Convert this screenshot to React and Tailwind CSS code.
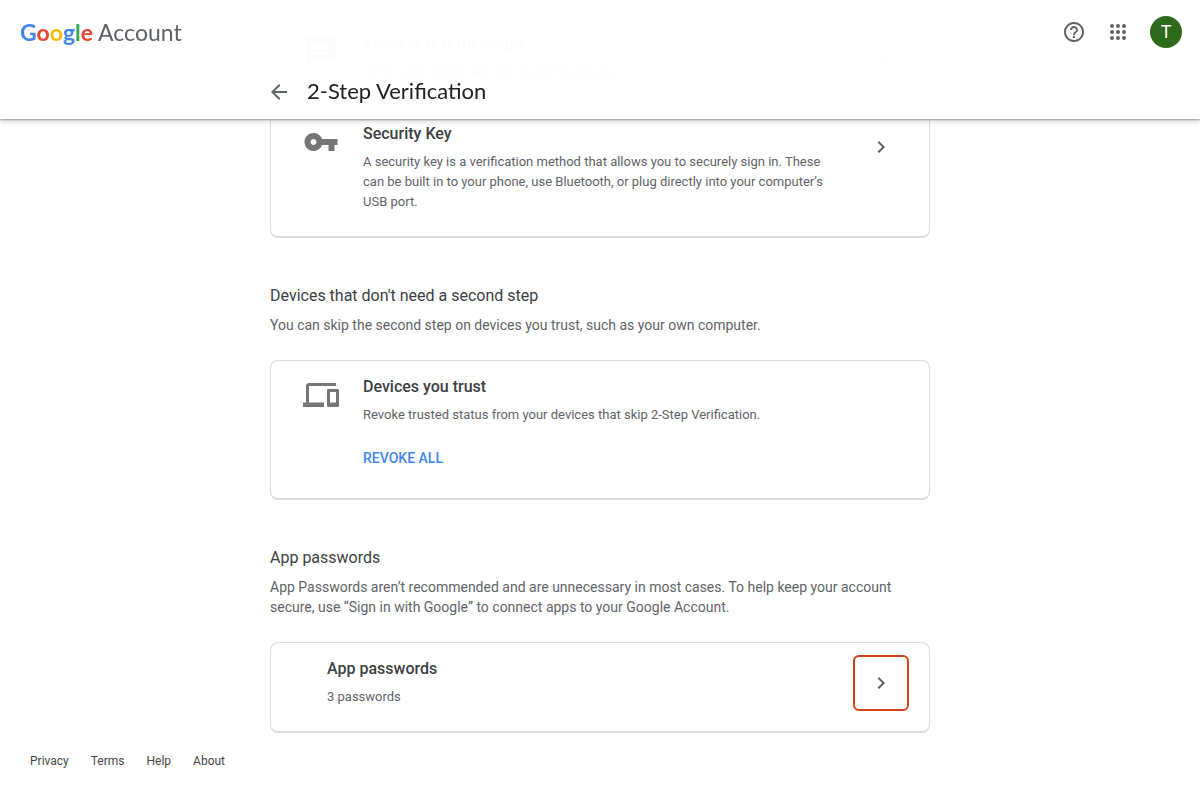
import React from "react";

const ICONS = {
  sms: "M20 2H4a2 2 0 0 0-2 2v18l4-4h14a2 2 0 0 0 2-2V4a2 2 0 0 0-2-2zM6 8h12v2H6V8zm0 4h12v2H6v-2z",
  key: "M12.65 10C11.83 7.67 9.61 6 7 6c-3.31 0-6 2.69-6 6s2.69 6 6 6c2.61 0 4.83-1.67 5.65-4H17v4h4v-4h2v-4H12.65zM7 14c-1.1 0-2-.9-2-2s.9-2 2-2 2 .9 2 2-.9 2-2 2z",
  devices: "M4 6h18V4H4c-1.1 0-2 .9-2 2v11H0v3h14v-3H4V6zm19 2h-6c-.55 0-1 .45-1 1v10c0 .55.45 1 1 1h6c.55 0 1-.45 1-1V9c0-.55-.45-1-1-1zm-1 9h-4v-7h4v7z",
  chevron: "M8.59 16.59L13.17 12 8.59 7.41 10 6l6 6-6 6-1.41-1.41z",
  back: "M20 11H7.83l5.59-5.59L12 4l-8 8 8 8 1.41-1.41L7.83 13H20v-2z",
  help: "M11 18h2v-2h-2v2zm1-16C6.48 2 2 6.48 2 12s4.48 10 10 10 10-4.48 10-10S17.52 2 12 2zm0 18c-4.41 0-8-3.59-8-8s3.59-8 8-8 8 3.59 8 8-3.59 8-8 8zm0-14c-2.21 0-4 1.79-4 4h2c0-1.1.9-2 2-2s2 .9 2 2c0 2-3 1.75-3 5h2c0-2.25 3-2.5 3-5 0-2.21-1.79-4-4-4z",
  apps: "M6 8a2 2 0 1 0 0-4 2 2 0 0 0 0 4zm6 0a2 2 0 1 0 0-4 2 2 0 0 0 0 4zm6 0a2 2 0 1 0 0-4 2 2 0 0 0 0 4zM6 14a2 2 0 1 0 0-4 2 2 0 0 0 0 4zm6 0a2 2 0 1 0 0-4 2 2 0 0 0 0 4zm6 0a2 2 0 1 0 0-4 2 2 0 0 0 0 4zM6 20a2 2 0 1 0 0-4 2 2 0 0 0 0 4zm6 0a2 2 0 1 0 0-4 2 2 0 0 0 0 4zm6 0a2 2 0 1 0 0-4 2 2 0 0 0 0 4z",
};

function Icon({ name, className }) {
  return (
    <svg viewBox="0 0 24 24" fill="currentColor" aria-hidden="true" className={className}>
      <path d={ICONS[name]} />
    </svg>
  );
}

function IconButton({ icon, label, className = "" }) {
  return (
    <button type="button" aria-label={label} className={`flex shrink-0 items-center justify-center ${className}`}>
      <Icon name={icon} className="size-6" />
    </button>
  );
}

function Header() {
  return (
    <header className="fixed inset-x-0 top-0 z-10 bg-white/98 shadow-[0_1px_2px_rgba(0,0,0,0.35),0_3px_6px_rgba(0,0,0,0.12)]">
      <div className="flex h-16 items-center justify-between pr-[18px] pl-5">
        <a href="#account" className="flex items-baseline gap-[5px] font-[Lato,sans-serif] text-[23px] text-[#5f6368]">
          <span className="font-bold">
            <span className="text-[#4285f4]">G</span>
            <span className="text-[#ea4335]">o</span>
            <span className="text-[#fbbc05]">o</span>
            <span className="text-[#4285f4]">g</span>
            <span className="text-[#34a853]">l</span>
            <span className="text-[#ea4335]">e</span>
          </span>
          <span>Account</span>
        </a>
        <div className="flex items-center gap-5 text-[#5f6368]">
          <IconButton icon="help" label="Help" />
          <IconButton icon="apps" label="Google apps" />
          <button type="button" aria-label="Profile" className="flex size-8 items-center justify-center rounded-full bg-[#2d6a1c] text-lg text-white">
            T
          </button>
        </div>
      </div>
      <div className="mx-auto flex h-[55px] max-w-[666px] items-center gap-4">
        <IconButton icon="back" label="Back" className="text-[#5f6368]" />
        <h1 className="pb-[2px] font-[Lato,sans-serif] text-[22px] text-[#202124]">2-Step Verification</h1>
      </div>
    </header>
  );
}

function Card({ className = "", children }) {
  return (
    <div className={`rounded-lg border border-b-2 border-[#dadce0] ${className}`}>{children}</div>
  );
}

function Method({ icon, title, text, children }) {
  return (
    <div className="flex items-start">
      <Icon name={icon} className="mt-[2px] size-9 shrink-0 text-[#757575]" />
      <div className="ml-6 min-w-0 flex-1">
        <h3 className="text-base leading-6 font-medium text-[#3c4043]">{title}</h3>
        <p className="mt-[6px] text-[13px] leading-5">{text}</p>
        {children}
      </div>
    </div>
  );
}

function LinkedMethod({ icon, title, text, className = "" }) {
  return (
    <div className={`flex items-start pr-9 ${className}`}>
      <div className="flex-1 pr-7">
        <Method icon={icon} title={title} text={text} />
      </div>
      <IconButton icon="chevron" label={title} className="mt-[13px] text-[#5f6368]" />
    </div>
  );
}

function Section({ title, text, children }) {
  return (
    <section className="pt-[46px]">
      <h2 className="text-base leading-6 text-[#3c4043]">{title}</h2>
      <p className="mt-[7px] mb-[25px] text-sm leading-5">{text}</p>
      {children}
    </section>
  );
}

export default function App() {
  return (
    <div className="min-h-screen bg-white font-[Roboto,sans-serif] text-[#5f6368]">
      <Header />
      <main className="mx-auto max-w-[660px]">
        <Card className="rounded-t-none border-t-0 pt-8 pb-6 pl-8">
          <LinkedMethod
            icon="sms"
            title="Voice or text message"
            text="Verification codes are sent by text message."
          />
          <LinkedMethod
            icon="key"
            title="Security Key"
            text="A security key is a verification method that allows you to securely sign in. These can be built in to your phone, use Bluetooth, or plug directly into your computer’s USB port."
            className="mt-10"
          />
        </Card>

        <Section
          title="Devices that don't need a second step"
          text="You can skip the second step on devices you trust, such as your own computer."
        >
          <Card className="py-[14px] pl-8">
            <Method
              icon="devices"
              title="Devices you trust"
              text="Revoke trusted status from your devices that skip 2-Step Verification."
            >
              <button type="button" className="mt-[15px] mb-2 flex h-9 items-center text-sm font-medium text-[#4285f4]">
                REVOKE ALL
              </button>
            </Method>
          </Card>
        </Section>

        <Section
          title="App passwords"
          text="App Passwords aren’t recommended and are unnecessary in most cases. To help keep your account secure, use “Sign in with Google” to connect apps to your Google Account."
        >
          <Card className="flex items-start justify-between py-3 pr-5 pl-14">
            <div className="pt-[2px] pb-3">
              <h3 className="text-base leading-6 font-medium text-[#3c4043]">App passwords</h3>
              <p className="mt-[6px] text-[13px] leading-5">3 passwords</p>
            </div>
            <IconButton icon="chevron" label="App passwords" className="size-14 rounded-md border-2 border-[#d3411a]" />
          </Card>
        </Section>
      </main>
      <footer className="flex gap-[22px] px-[30px] pt-5 pb-4 text-xs leading-4 text-[#444746]">
        <a href="#privacy">Privacy</a>
        <a href="#terms">Terms</a>
        <a href="#help">Help</a>
        <a href="#about">About</a>
      </footer>
    </div>
  );
}
